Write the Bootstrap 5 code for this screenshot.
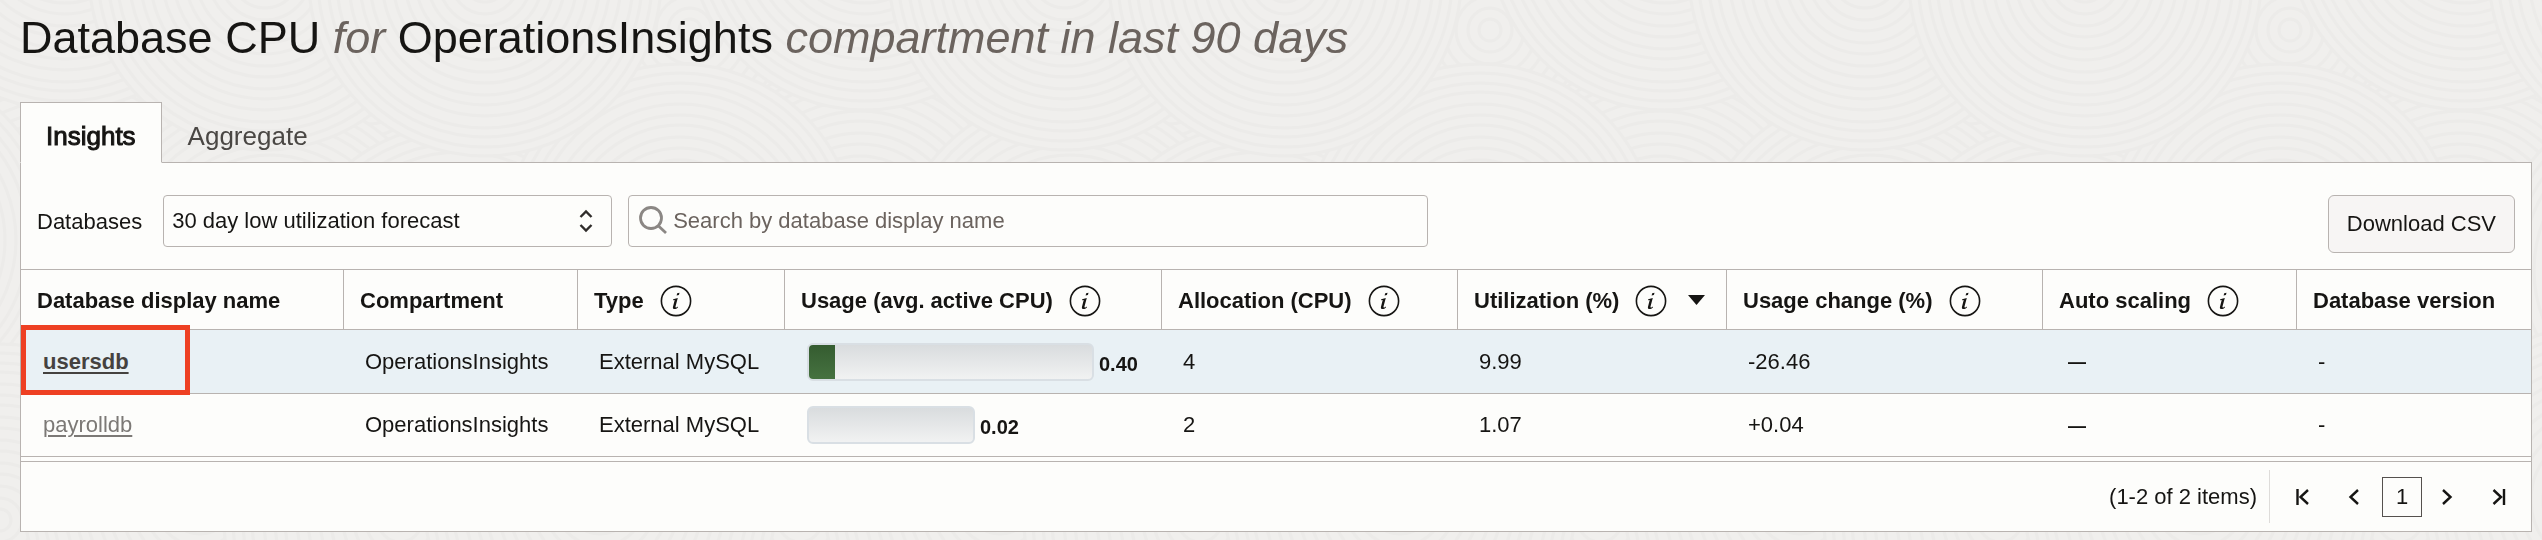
<!DOCTYPE html>
<html lang="en">
<head>
<meta charset="utf-8">
<meta name="viewport" content="width=device-width, initial-scale=1">
<title>Database CPU</title>
<link href="https://cdn.jsdelivr.net/npm/bootstrap@5.3.0/dist/css/bootstrap.min.css" rel="stylesheet">
<style>
:root { --line: #b8b3b0; --ink: #161513; --panel: #fdfdfb; }
body {
  font-family: "Liberation Sans", Arial, sans-serif;
  font-size: 22px; line-height: 28px; color: var(--ink);
  background-color: #f0efed;
}
.bg-waves { position: fixed; inset: 0; width: 100%; height: 100%; z-index: -1; }
.page { padding: 12px 10px 8px 20px; }
.page-title { font-size: 45px; line-height: 52px; font-weight: 400; margin: 0 0 38px; }
.page-title em { color: #6b635e; }
.nav-tabs { border: 0; margin-bottom: -1px; position: relative; }
.nav-tabs .nav-link {
  border: 1px solid transparent; border-radius: 0; padding: 18px 25px 11px;
  font-size: 26px; line-height: 30px; color: #4a4744; margin: 0;
}
.nav-tabs .nav-link.active {
  background: var(--panel); border-color: var(--line); border-bottom-color: var(--panel);
  color: var(--ink); -webkit-text-stroke: 1px var(--ink);
}
.panel { background: var(--panel); border: 1px solid var(--line); }
.toolbar { padding: 32px 16px 16px; }
.databases-label { margin-right: 21px; padding-top: 2px; }
.field { height: 52px; border: 1px solid var(--line); border-radius: 4px; font-size: 22px; line-height: 28px; color: var(--ink); background-color: var(--panel); }
.view-select { width: 449px; padding: 0 36px 0 8px; appearance: none; display: block; }
.search-box { width: 800px; }
.search-box input { border: 0; outline: 0; background: transparent; width: 100%; font-size: 22px; padding: 0; }
.search-box input::placeholder { color: #6b635e; opacity: 1; }
.btn-csv { height: 58px; padding: 0 18px; font-size: 22px; border: 1px solid var(--line); border-radius: 6px; background: #f7f5f4; color: var(--ink); }
.db-table { table-layout: fixed; width: 100%; border-collapse: separate; border-spacing: 0; }
.db-table th { height: 61px; padding: 2px 0 0 16px; border: solid var(--line); border-width: 1px 0 1px 1px; white-space: nowrap; }
.db-table th:first-child { border-left: 0; }
.db-table td { height: 64px; padding: 0 0 0 22px; border-bottom: 1px solid var(--line); white-space: nowrap; }
.db-table tr:last-child td { height: 63px; }
.db-table .picked td { background: #e9f1f5; }
.info { width: 32px; height: 32px; flex: none; }
.usage-track { height: 38px; border: 2px solid #d9dfe4; border-radius: 6px; background: linear-gradient(#d9dcde, #f1f2f2); overflow: hidden; margin-left: 1px; }
.usage-fill { height: 100%; background: linear-gradient(#355c30, #467240); }
.usage-num { font-size: 20px; font-weight: 700; line-height: 24px; margin: 4px 0 0 5px; }
.none-mark { font-size: 18px; font-weight: 700; }
.db-link { color: #7c7976; text-underline-offset: 3px; text-decoration-thickness: 2px; }
.picked .db-link { color: #45423f; font-weight: 700; }
.picked td:first-child { position: relative; }
.callout-box { position: absolute; left: 0; top: -5px; width: 169px; height: 70px; border: 5px solid #ee4023; pointer-events: none; }
.pager { margin-top: 4px; border-top: 1px solid var(--line); height: 70px; padding: 0 13px 0 0; }
.pager .rule { width: 1px; height: 53px; background: #dedcda; margin-left: 12px; }
.pager .step { margin-left: 12px; }
.pager button { border: 0; background: none; padding: 0; width: 40px; height: 40px; color: var(--ink); display: flex; align-items: center; justify-content: center; }
.pager button.current { border: 1px solid #55514e; font-size: 22px; }
</style>
</head>
<body>
<svg class="bg-waves" aria-hidden="true">
  <defs>
    <g id="rings" fill="none" stroke="#ecebe9" stroke-width="3">
      <circle r="176" fill="#f0efed"/><circle r="167"/><circle r="157"/><circle r="148"/><circle r="136"/><circle r="125"/><circle r="115"/><circle r="103"/><circle r="92"/><circle r="80"/><circle r="69"/><circle r="57"/><circle r="46"/><circle r="34"/><circle r="22"/><circle r="11"/>
    </g>
    <pattern id="waves" width="800" height="540" patternUnits="userSpaceOnUse">
      <rect width="800" height="540" fill="#f0efed"/>
      <use href="#rings" x="160" y="80"/><use href="#rings" x="370" y="90"/><use href="#rings" x="690" y="30"/>
      <use href="#rings" x="60" y="236"/><use href="#rings" x="860" y="236"/>
      <use href="#rings" x="270" y="270"/><use href="#rings" x="460" y="300"/>
      <use href="#rings" x="680" y="240"/><use href="#rings" x="-120" y="240"/>
      <use href="#rings" x="65" y="-66"/><use href="#rings" x="865" y="-66"/>
      <use href="#rings" x="265" y="-26"/><use href="#rings" x="485" y="-20"/>
      <use href="#rings" x="0" y="520"/><use href="#rings" x="800" y="520"/><use href="#rings" x="200" y="500"/><use href="#rings" x="400" y="520"/><use href="#rings" x="600" y="500"/>
    </pattern>
  </defs>
  <rect width="100%" height="100%" fill="url(#waves)"/>
</svg>
<svg class="d-none" aria-hidden="true">
  <symbol id="i-info" viewBox="0 0 32 32">
    <circle cx="16" cy="16" r="14.6" fill="none" stroke="#161513" stroke-width="1.6"/>
    <path d="M17.2 8.2l2.3-.5-.6 2.4-2.3.5z" fill="#161513"/>
    <path d="M13.2 14.2l4.6-1.2-2.3 8.6c-.2.9.3 1.1 1 .8l1.5-1-.1 1.1c-1.5 1.3-2.8 1.7-4 1.4-.9-.2-1.2-1-.9-2.2l1.7-6.6-1.7.2z" fill="#161513"/>
  </symbol>
</svg>
<main class="page">
  <h1 class="page-title">Database CPU <em>for</em> OperationsInsights <em>compartment in last 90 days</em></h1>
  <nav class="nav nav-tabs">
    <a class="nav-link active" href="#insights" aria-current="page">Insights</a>
    <a class="nav-link" href="#aggregate">Aggregate</a>
  </nav>
  <section class="panel" id="insights">
    <div class="toolbar d-flex align-items-start">
      <div class="d-flex align-items-center">
        <label for="view" class="databases-label">Databases</label>
        <div class="position-relative me-3">
          <select id="view" class="field view-select"><option>30 day low utilization forecast</option></select>
          <svg class="position-absolute end-0 top-50 translate-middle-y me-3 pe-none" width="20" height="26" viewBox="0 0 20 26" fill="none" stroke="#2f2c2a" stroke-width="2.4"><path d="M4.500 9l5.500-5.500L15.500 9M4.500 17l5.500 5.500 5.500-5.500"/></svg>
        </div>
        <div class="field search-box d-flex align-items-center">
          <svg class="ms-2 me-1 flex-shrink-0" width="32" height="32" viewBox="0 0 32 32" fill="none" stroke="#8b8784" stroke-width="2.8"><circle cx="14" cy="13" r="10.5"/><path d="M21 20.500l8 7.500"/></svg>
          <input type="search" placeholder="Search by database display name" aria-label="Search by database display name">
        </div>
      </div>
      <button type="button" class="btn-csv ms-auto">Download CSV</button>
    </div>
    <table class="db-table">
      <colgroup><col style="width:322px"><col style="width:234px"><col style="width:207px"><col style="width:377px"><col style="width:296px"><col style="width:269px"><col style="width:316px"><col style="width:254px"><col style="width:235px"></colgroup>
      <thead>
        <tr>
          <th scope="col">Database display name</th>
          <th scope="col">Compartment</th>
          <th scope="col"><div class="d-flex align-items-center gap-3">Type <svg class="info"><use href="#i-info"/></svg></div></th>
          <th scope="col"><div class="d-flex align-items-center gap-3">Usage (avg. active CPU) <svg class="info"><use href="#i-info"/></svg></div></th>
          <th scope="col"><div class="d-flex align-items-center gap-3">Allocation (CPU) <svg class="info"><use href="#i-info"/></svg></div></th>
          <th scope="col" aria-sort="descending"><div class="d-flex align-items-center gap-3">Utilization (%) <svg class="info"><use href="#i-info"/></svg><svg class="ms-1" width="18" height="14" viewBox="0 0 18 14"><path d="M1 1h17L9.500 11z" fill="#161513"/></svg></div></th>
          <th scope="col"><div class="d-flex align-items-center gap-3">Usage change (%) <svg class="info"><use href="#i-info"/></svg></div></th>
          <th scope="col"><div class="d-flex align-items-center gap-3">Auto scaling <svg class="info"><use href="#i-info"/></svg></div></th>
          <th scope="col">Database version</th>
        </tr>
      </thead>
      <tbody>
        <tr class="picked">
          <td><a class="db-link" href="#usersdb">usersdb</a><span class="callout-box"></span></td>
          <td>OperationsInsights</td>
          <td>External MySQL</td>
          <td><div class="d-flex align-items-center"><div class="usage-track" style="width:287px"><div class="usage-fill" style="width:9.3%"></div></div><span class="usage-num">0.40</span></div></td>
          <td>4</td><td>9.99</td><td>-26.46</td><td><span class="none-mark ms-1">—</span></td><td>-</td>
        </tr>
        <tr>
          <td><a class="db-link" href="#payrolldb">payrolldb</a></td>
          <td>OperationsInsights</td>
          <td>External MySQL</td>
          <td><div class="d-flex align-items-center"><div class="usage-track" style="width:168px"></div><span class="usage-num">0.02</span></div></td>
          <td>2</td><td>1.07</td><td>+0.04</td><td><span class="none-mark ms-1">—</span></td><td>-</td>
        </tr>
      </tbody>
    </table>
    <div class="pager d-flex align-items-center justify-content-end">
      <span>(1-2 of 2 items)</span>
      <span class="rule"></span>
      <button type="button" class="step" aria-label="First page"><svg width="18" height="18" viewBox="0 0 18 18" fill="none" stroke="currentColor" stroke-width="2.4"><path d="M4.500 1v16M15 2L7.500 9l7.500 7"/></svg></button>
      <button type="button" class="step" aria-label="Previous page"><svg width="18" height="18" viewBox="0 0 18 18" fill="none" stroke="currentColor" stroke-width="2.4"><path d="M13 2L5.500 9l7.500 7"/></svg></button>
      <button type="button" class="current ms-2" aria-current="page">1</button>
      <button type="button" class="ms-1" aria-label="Next page"><svg width="18" height="18" viewBox="0 0 18 18" fill="none" stroke="currentColor" stroke-width="2.4"><path d="M6 2l7.500 7L6 16"/></svg></button>
      <button type="button" class="step" aria-label="Last page"><svg width="18" height="18" viewBox="0 0 18 18" fill="none" stroke="currentColor" stroke-width="2.4"><path d="M15 1v16M4.500 2l7.500 7-7.500 7"/></svg></button>
    </div>
  </section>
</main>
<script src="https://cdn.jsdelivr.net/npm/bootstrap@5.3.0/dist/js/bootstrap.bundle.min.js"></script>
</body>
</html>
